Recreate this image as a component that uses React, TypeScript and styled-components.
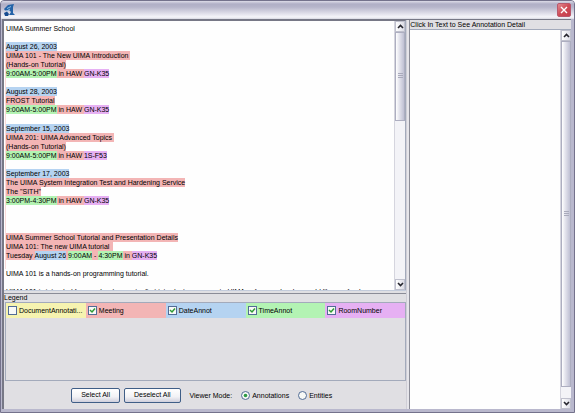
import React, { useState } from "react";
import styled, { createGlobalStyle } from "styled-components";

const colors = {
  face: "#e0dfe3",
  line: "#a3aabb",
  dark: "#777886",
  doc: "#f6f3b0",
  meeting: "#f3b5b5",
  date: "#b5d3f1",
  time: "#b3f3b3",
  room: "#e6b0f3",
};

const GlobalStyle = createGlobalStyle`
  * { box-sizing: border-box; }
  body { margin: 0; }
  body, button, input { font-family: "Liberation Sans", Arial, sans-serif; font-size: 7px; color: #000; }
`;

const Frame = styled.div`
  display: flex;
  flex-direction: column;
  height: 100vh;
  padding: 0 3px 3px 1px;
  border: 1px solid #74728c;
  border-radius: 4px 4px 0 0;
  background: #b9b8cd;
  overflow: hidden;
`;

const TitleBar = styled.header`
  display: flex;
  align-items: center;
  justify-content: space-between;
  flex: none;
  height: 18px;
  margin: 0 -3px 0 -1px;
  padding: 0 3px 0 3px;
  background: linear-gradient(#dddce8 0, #b0afc6 3px, #b6b5ca 6px, #e3e2ec 13px, #f6f6fa 16px, #d8d8e2 18px);
`;

const CloseButton = styled.button`
  display: grid;
  place-items: center;
  width: 14px;
  height: 14px;
  padding: 0;
  border: 1px solid #b9576b;
  border-radius: 2px;
  background: linear-gradient(135deg, #e08a90, #cf4b56 50%, #c53e4c);
`;

const Content = styled.main`
  display: grid;
  grid-template-columns: minmax(0, 403fr) 3px minmax(0, 162fr);
  flex: 1;
  min-height: 0;
  border-top: 1px solid ${colors.dark};
  border-left: 2px solid ${colors.dark};
  background: ${colors.face};
`;

const LeftColumn = styled.div`
  display: flex;
  flex-direction: column;
  min-height: 0;
`;

const Divider = styled.div`
  background: #e6e5ea;
  border-left: 1px solid #cfced6;
`;

const TextPane = styled.section`
  display: flex;
  flex: 1;
  min-height: 0;
  border: 1px solid ${colors.dark};
  border-width: 1px 1px 0 0;
  border-right-color: ${colors.line};
  background: #fefefe;
`;

const Document = styled.div`
  flex: 1;
  min-width: 0;
  padding: 3px 2px 0 1px;
  overflow: hidden;
  line-height: 9px;
  white-space: nowrap;
`;

const Annotated = styled.div`
  border-left: 1px solid #fadada;
`;

const Paragraph = styled.div<{ $space?: number }>`
  padding-bottom: ${(p) => p.$space ?? 9}px;
`;

const PlainParagraph = styled(Paragraph)`
  padding-left: 1px;
`;

const Mark = styled.mark<{ $color: string }>`
  display: inline-block;
  height: 9px;
  background: ${(p) => p.$color};
  color: inherit;
  vertical-align: top;
  white-space: pre;
`;

const Scrollbar = styled.div`
  display: flex;
  flex-direction: column;
  flex: none;
  width: 11px;
  border-left: 1px solid #d5d5de;
  background: #f3f3f7;
`;

const ArrowButton = styled.button`
  display: grid;
  place-items: center;
  flex: none;
  height: 11px;
  padding: 0;
  border: 1px solid #bfc0cd;
  background: linear-gradient(90deg, #ffffff, #dcdce6);
`;

const Track = styled.div`
  flex: 1;
  min-height: 0;
`;

const Thumb = styled.div<{ $share: number }>`
  display: grid;
  place-items: center;
  height: ${(p) => p.$share}%;
  border: 1px solid #adaec0;
  background: linear-gradient(90deg, #ffffff, #e4e4ed 40%, #bfc0d3);
`;

const Splitter = styled.div`
  flex: none;
  height: 4px;
  border-top: 1px solid #c3cbdb;
  border-bottom: 1px solid #8b8c97;
`;

const Caption = styled.h2`
  flex: none;
  margin: 0;
  font-size: 7px;
  font-weight: normal;
  line-height: 9px;
`;

const LegendCaption = styled(Caption)`
  line-height: 8px;
`;

const LegendBox = styled.div`
  flex: none;
  height: 79px;
  margin: 0 0 0 1px;
  border: 1px solid ${colors.line};
`;

const LegendRow = styled.div`
  display: grid;
  grid-template-columns: repeat(5, minmax(0, 1fr));
`;

const LegendItem = styled.label<{ $color: string }>`
  display: flex;
  align-items: center;
  gap: 2px;
  height: 15px;
  padding: 0 1px 0 2px;
  background: ${(p) => p.$color};
  white-space: nowrap;
`;

const Box = styled.span`
  display: grid;
  flex: none;
  width: 9px;
  height: 9px;
  > * { grid-area: 1 / 1; }
  > svg { pointer-events: none; }
`;

const CheckInput = styled.input`
  appearance: none;
  width: 9px;
  height: 9px;
  margin: 0;
  border: 1px solid #526c96;
  background: #f8f9f6;
`;

const RadioInput = styled(CheckInput)`
  border-radius: 50%;
`;

const Controls = styled.div`
  display: flex;
  align-items: center;
  justify-content: center;
  flex: none;
  gap: 9px;
  height: 28px;
  padding-right: 7px;
`;

const ButtonGroup = styled.div`
  display: flex;
  gap: 4px;
`;

const PushButton = styled.button`
  height: 15px;
  padding: 0 9px;
  border: 1px solid #3f5e87;
  border-radius: 2px;
  background: linear-gradient(#ffffff, #f2f2f5 60%, #cfcfdc);
  line-height: 12px;
  white-space: nowrap;
`;

const RadioLabel = styled.label`
  display: flex;
  align-items: center;
  gap: 2px;
`;

const DetailColumn = styled.section`
  display: flex;
  flex-direction: column;
  min-height: 0;
  border-left: 1px solid #8b8c97;
`;

const DetailPane = styled.div`
  display: flex;
  justify-content: flex-end;
  flex: 1;
  min-height: 0;
  border-top: 1px solid ${colors.line};
  background: #fefefe;
`;

const Arrow = ({ up }: { up?: boolean }) => (
  <svg width="7" height="5" viewBox="0 0 7 5" fill="none" stroke="#25252d" strokeWidth="1.6">
    <path d={up ? "M1 4 3.5 1.5 6 4" : "M1 1 3.5 3.5 6 1"} />
  </svg>
);

const ScrollControl = ({ share }: { share: number }) => (
  <Scrollbar>
    <ArrowButton aria-label="Scroll up"><Arrow up /></ArrowButton>
    <Track>
      <Thumb $share={share}>
        <svg width="5" height="6" viewBox="0 0 5 6" stroke="#a9aabb">
          <path d="M0 .5H5M0 2.5H5M0 4.5H5" />
        </svg>
      </Thumb>
    </Track>
    <ArrowButton aria-label="Scroll down"><Arrow /></ArrowButton>
  </Scrollbar>
);

type Children = { children: React.ReactNode };
const Meeting = ({ children }: Children) => <Mark $color={colors.meeting}>{children}</Mark>;
const DateMark = ({ children }: Children) => <Mark $color={colors.date}>{children}</Mark>;
const Time = ({ children }: Children) => <Mark $color={colors.time}>{children}</Mark>;
const Room = ({ children }: Children) => <Mark $color={colors.room}>{children}</Mark>;

type Session = { date: string; lines: string[]; time: string; room: string; space?: number };

const sessions: Session[] = [
  { date: "August 26, 2003", lines: ["UIMA 101 - The New UIMA Introduction ", "(Hands-on Tutorial)"], time: "9:00AM-5:00PM", room: "GN-K35" },
  { date: "August 28, 2003", lines: ["FROST Tutorial"], time: "9:00AM-5:00PM", room: "GN-K35", space: 10 },
  { date: "September 15, 2003", lines: ["UIMA 201: UIMA Advanced Topics ", "(Hands-on Tutorial)"], time: "9:00AM-5:00PM", room: "1S-F53" },
  { date: "September 17, 2003", lines: ["The UIMA System Integration Test and Hardening Service", "The \"SITH\""], time: "3:00PM-4:30PM", room: "GN-K35", space: 28 },
];

const legend = [
  { name: "DocumentAnnotati...", color: colors.doc, checked: false },
  { name: "Meeting", color: colors.meeting, checked: true },
  { name: "DateAnnot", color: colors.date, checked: true },
  { name: "TimeAnnot", color: colors.time, checked: true },
  { name: "RoomNumber", color: colors.room, checked: true },
];

export default function App() {
  const [checked, setChecked] = useState(legend.map((l) => l.checked));
  const [mode, setMode] = useState("Annotations");

  return (
    <>
      <GlobalStyle />
      <Frame>
        <TitleBar>
          <svg width="12" height="12" viewBox="0 0 12 12">
            <path d="M0 5 4 1 10 0 9 3V9L11 11H5L7 8 5 6 1 6.5Z" fill="#2463a8" />
            <path d="M0 9 3 7.5 5 10 4 12H1Z" fill="#174c91" />
            <path d="M3 4.5 7 2.5M3 7 6 5" stroke="#8cc0e6" />
          </svg>
          <CloseButton aria-label="Close">
            <svg width="8" height="8" viewBox="0 0 8 8" stroke="#fff" strokeWidth="1.4">
              <path d="M1 1 7 7M7 1 1 7" />
            </svg>
          </CloseButton>
        </TitleBar>
        <Content>
          <LeftColumn>
            <TextPane>
              <Document>
                <PlainParagraph>UIMA Summer School</PlainParagraph>
                <Annotated>
                  {sessions.map((s) => (
                    <Paragraph key={s.date} $space={s.space}>
                      <DateMark>{s.date}</DateMark>
                      {s.lines.map((line) => (
                        <div key={line}><Meeting>{line}</Meeting></div>
                      ))}
                      <div>
                        <Time>{s.time}</Time><Meeting> in HAW </Meeting><Room>{s.room}</Room>
                      </div>
                    </Paragraph>
                  ))}
                  <Paragraph>
                    <div><Meeting>UIMA Summer School Tutorial and Presentation Details</Meeting></div>
                    <div><Meeting>{"UIMA 101: The new UIMA tutorial  "}</Meeting></div>
                    <div>
                      <Meeting>Tuesday </Meeting><DateMark>August 26</DateMark><Meeting> </Meeting>
                      <Time>9:00AM</Time><Meeting> - </Meeting><Time>4:30PM</Time><Meeting> in </Meeting><Room>GN-K35</Room>
                    </div>
                  </Paragraph>
                </Annotated>
                <PlainParagraph>UIMA 101 is a hands-on programming tutorial.</PlainParagraph>
                <PlainParagraph>
                  UIMA 101 is intended for people who want a first introductory course to UIMA or for people who would like a refresher
                </PlainParagraph>
              </Document>
              <ScrollControl share={36} />
            </TextPane>
            <Splitter />
            <LegendCaption>Legend</LegendCaption>
            <LegendBox>
              <LegendRow>
                {legend.map((item, i) => (
                  <LegendItem key={item.name} $color={item.color}>
                    <Box>
                      <CheckInput
                        type="checkbox"
                        checked={checked[i]}
                        onChange={() => setChecked(checked.map((c, j) => (j === i ? !c : c)))}
                      />
                      {checked[i] && (
                        <svg width="9" height="9" viewBox="0 0 9 9" fill="none" stroke="#2f9a35" strokeWidth="1.5">
                          <path d="M2 4 4 6 7 2.5" />
                        </svg>
                      )}
                    </Box>
                    {item.name}
                  </LegendItem>
                ))}
              </LegendRow>
            </LegendBox>
            <Controls>
              <ButtonGroup>
                <PushButton onClick={() => setChecked(legend.map(() => true))}>Select All</PushButton>
                <PushButton onClick={() => setChecked(legend.map(() => false))}>Deselect All</PushButton>
              </ButtonGroup>
              <span>Viewer Mode:</span>
              {["Annotations", "Entities"].map((name) => (
                <RadioLabel key={name}>
                  <Box>
                    <RadioInput type="radio" name="mode" checked={mode === name} onChange={() => setMode(name)} />
                    {mode === name && (
                      <svg width="9" height="9" viewBox="0 0 9 9">
                        <circle cx="4.5" cy="4.5" r="1.8" fill="#2f9a45" />
                      </svg>
                    )}
                  </Box>
                  {name}
                </RadioLabel>
              ))}
            </Controls>
          </LeftColumn>
          <Divider />
          <DetailColumn>
            <Caption>Click In Text to See Annotation Detail</Caption>
            <DetailPane>
              <ScrollControl share={97} />
            </DetailPane>
          </DetailColumn>
        </Content>
      </Frame>
    </>
  );
}
